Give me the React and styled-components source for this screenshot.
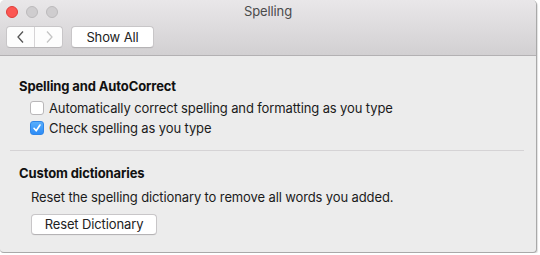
import React from "react";
import styled, { createGlobalStyle } from "styled-components";

const Global = createGlobalStyle`
  html, body { margin: 0; padding: 0; background: #ffffff; }
  body { font-family: "Inter", "Liberation Sans", sans-serif; -webkit-font-smoothing: antialiased; letter-spacing: -0.12px; }
`;

const Window = styled.div`
  width: 537px;
  height: 253px;
  box-sizing: border-box;
  background: #ececec;
  border-radius: 5px 5px 4px 4px;
  border-right: 1px solid #a9a9a9;
  border-bottom: 1px solid #a9a9a9;
  box-shadow: 1px 1px 1px rgba(0,0,0,0.12);
  display: flex;
  flex-direction: column;
  overflow: hidden;
`;

const Toolbar = styled.div`
  height: 56px;
  box-sizing: border-box;
  background: linear-gradient(#e9e7e9, #d2d0d2);
  border-bottom: 1px solid #b3b1b3;
  display: flex;
  flex-direction: column;
  padding: 0 0 0 6px;
`;

const TitleRow = styled.div`
  position: relative;
  height: 25px;
  display: flex;
  align-items: center;
`;

const Lights = styled.div`
  display: flex;
  gap: 8px;
  margin-top: -1px;
`;

const Light = styled.span`
  width: 12px;
  height: 12px;
  border-radius: 50%;
  box-sizing: border-box;
  background: ${(p) => (p.$red ? "#fc5753" : "#cfcdcf")};
  border: 0.5px solid ${(p) => (p.$red ? "#df3d39" : "#bcbabc")};
`;

const Title = styled.div`
  position: absolute;
  left: 0;
  right: 6px;
  top: 3px;
  text-align: center;
  font-size: 13px;
  color: #4b4b4b;
  pointer-events: none;
`;

const ButtonRow = styled.div`
  display: flex;
  align-items: center;
  gap: 8px;
  margin-top: 1px;
`;

const Segmented = styled.div`
  display: flex;
  height: 22px;
  box-sizing: border-box;
  border-radius: 4px;
  background: #fdfdfd;
  border: 1px solid #c8c6c8;
  border-bottom-color: #b8b6b8;
  overflow: hidden;
`;

const Seg = styled.div`
  width: 27px;
  display: flex;
  align-items: center;
  justify-content: center;
  border-left: ${(p) => (p.$divider ? "1px solid #d6d4d6" : "none")};
`;

const PushButton = styled.button`
  height: ${(p) => p.$h || 22}px;
  width: ${(p) => p.$w}px;
  box-sizing: border-box;
  border-radius: 4px;
  background: #ffffff;
  border: 1px solid #c8c6c8;
  border-bottom-color: #b5b3b5;
  font-family: inherit;
  letter-spacing: inherit;
  font-size: 13px;
  color: #222;
  padding: 0;
  box-shadow: 0 0.5px 0 rgba(0,0,0,0.05);
`;

const Content = styled.div`
  flex: 1;
  padding: 22px 12px 0 10px;
  display: flex;
  flex-direction: column;
`;

const Section = styled.div`
  padding-left: 9px;
  display: flex;
  flex-direction: column;
`;

const Heading = styled.div`
  font-size: 13px;
  font-weight: 700;
  color: #111;
  line-height: 16px;
`;

const Options = styled.div`
  display: flex;
  flex-direction: column;
  gap: 4px;
  padding-left: 11px;
  margin-top: 6px;
`;

const Option = styled.label`
  display: flex;
  align-items: center;
  gap: 5px;
  font-size: 13px;
  color: #1b1b1b;
  line-height: 16px;
`;

const Box = styled.span`
  width: 14px;
  height: 14px;
  box-sizing: border-box;
  border-radius: 3px;
  display: flex;
  align-items: center;
  justify-content: center;
  background: ${(p) => (p.$on ? "linear-gradient(#58aefc, #2d8cf7)" : "#ffffff")};
  border: 1px solid ${(p) => (p.$on ? "#2f86e8" : "#b9b7b9")};
`;

const Divider = styled.div`
  height: 1px;
  background: #d5d3d5;
  margin: 14px 0 14px 0;
`;

const Text = styled.div`
  font-size: 13px;
  color: #1b1b1b;
  line-height: 16px;
  padding-left: 12px;
  margin-top: 8px;
`;

const ButtonWrap = styled.div`
  padding-left: 12px;
  margin-top: 8px;
`;

const Chevron = ({ dir, color }) => (
  <svg width="10" height="14" viewBox="0 0 10 14">
    <path
      d={dir === "left" ? "M7 1.5 L2 7 L7 12.5" : "M3 1.5 L8 7 L3 12.5"}
      fill="none"
      stroke={color}
      strokeWidth="1.3"
    />
  </svg>
);

const Check = () => (
  <svg width="10" height="10" viewBox="0 0 10 10">
    <path d="M2 5.3 L4.2 7.8 L8 2" fill="none" stroke="#fff" strokeWidth="1.6" strokeLinecap="round" strokeLinejoin="round" />
  </svg>
);

export default function App() {
  return (
    <>
      <Global />
      <Window>
        <Toolbar>
          <TitleRow>
            <Lights>
              <Light $red />
              <Light />
              <Light />
            </Lights>
            <Title>Spelling</Title>
          </TitleRow>
          <ButtonRow>
            <Segmented>
              <Seg>
                <Chevron dir="left" color="#555" />
              </Seg>
              <Seg $divider>
                <Chevron dir="right" color="#c4c4c4" />
              </Seg>
            </Segmented>
            <PushButton $w={83}>Show All</PushButton>
          </ButtonRow>
        </Toolbar>
        <Content>
          <Section>
            <Heading>Spelling and AutoCorrect</Heading>
            <Options>
              <Option>
                <Box />
                Automatically correct spelling and formatting as you type
              </Option>
              <Option>
                <Box $on>
                  <Check />
                </Box>
                Check spelling as you type
              </Option>
            </Options>
          </Section>
          <Divider />
          <Section>
            <Heading>Custom dictionaries</Heading>
            <Text>Reset the spelling dictionary to remove all words you added.</Text>
            <ButtonWrap>
              <PushButton $w={126} $h={21}>Reset Dictionary</PushButton>
            </ButtonWrap>
          </Section>
        </Content>
      </Window>
    </>
  );
}
